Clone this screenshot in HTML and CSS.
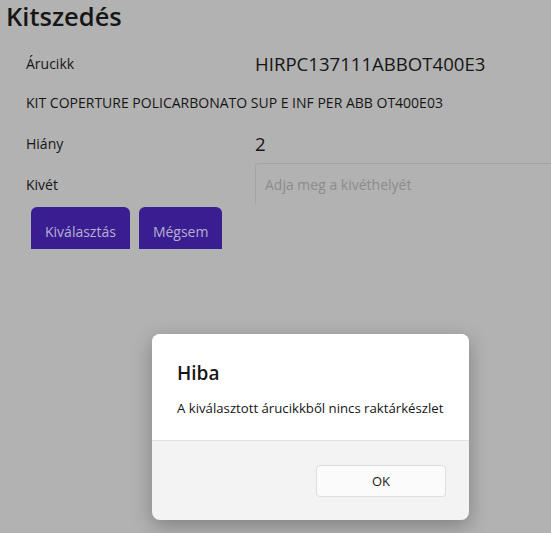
FILE: index.html
```html
<!DOCTYPE html>
<html lang="hu">
<head>
<meta charset="utf-8">
<link rel="stylesheet" href="styles.css">
</head>
<body>
<div class="page">
  <h1 class="title">Kitszedés</h1>
  <div class="form">
    <div class="row">
      <span class="label">Árucikk</span>
      <span class="value code">HIRPC137111ABBOT400E3</span>
    </div>
    <div class="desc">KIT COPERTURE POLICARBONATO SUP E INF PER ABB OT400E03</div>
    <div class="row">
      <span class="label">Hiány</span>
      <span class="value">2</span>
    </div>
    <div class="row row-input">
      <span class="label">Kivét</span>
      <div class="input">Adja meg a kivéthelyét</div>
    </div>
    <div class="actions">
      <button class="btn">Kiválasztás</button>
      <button class="btn">Mégsem</button>
    </div>
  </div>
</div>
<div class="dialog">
  <div class="dialog-body">
    <div class="dialog-title">Hiba</div>
    <div class="dialog-msg">A kiválasztott árucikkből nincs raktárkészlet</div>
  </div>
  <div class="dialog-foot">
    <button class="ok">OK</button>
  </div>
</div>
</body>
</html>
```

FILE: styles.css
```css
* { box-sizing: border-box; }
html, body { margin: 0; height: 100%; }
body {
  background: #b2b2b2;
  font-family: "Open Sans", "Noto Sans", sans-serif;
  color: #161616;
  overflow: hidden;
  position: relative;
}
.page { padding: 0 0 0 6px; }
.title {
  margin: 0;
  font-size: 25.5px;
  font-weight: 600;
  line-height: 32px;
}
.form { padding-left: 20px; padding-top: 11px; }
.row {
  display: grid;
  grid-template-columns: 229px 1fr;
  align-items: center;
  height: 40px;
}
.label { font-size: 14px; }
.value { font-size: 18.6px; }
.desc { font-size: 14px; height: 40px; line-height: 40px; white-space: nowrap; }
.row-input { height: 42px; }
.input {
  height: 42px;
  border-top: 1px solid #a3a3a3;
  border-left: 1px solid #a3a3a3;
  border-top-left-radius: 4px;
  padding: 0 9px;
  line-height: 42px;
  font-size: 14px;
  color: #8c8c8c;
}
.actions {
  display: flex;
  gap: 9px;
  padding-left: 5px;
  margin-top: 2px;
  height: 42px;
  overflow: hidden;
}
.btn {
  background: #391e92;
  color: #b6b0cf;
  border: 0;
  border-radius: 6px;
  font-family: inherit;
  font-size: 14px;
  padding: 0 14px;
  height: 50px;
  line-height: 42px;
  align-self: flex-start;
}
.dialog {
  position: absolute;
  left: 152px;
  top: 334px;
  width: 317px;
  height: 186px;
  border-radius: 8px;
  overflow: hidden;
  background: #f3f3f3;
  box-shadow: 0 6px 20px rgba(0,0,0,0.28);
  display: flex;
  flex-direction: column;
}
.dialog-body {
  background: #fff;
  height: 107px;
  padding: 26px 25px 0;
  border-bottom: 1px solid #e3e3e3;
}
.dialog-title { font-size: 19px; font-weight: 600; line-height: 26px; }
.dialog-msg { font-size: 13.2px; margin-top: 13px; line-height: 18px; }
.dialog-foot {
  flex: 1;
  display: flex;
  justify-content: flex-end;
  align-items: flex-start;
  padding: 24px 23px 0 0;
}
.ok {
  width: 130px;
  height: 32px;
  background: #fbfbfb;
  border: 1px solid #dedede;
  border-radius: 4px;
  font-family: inherit;
  font-size: 13px;
  color: #1a1a1a;
}
```
